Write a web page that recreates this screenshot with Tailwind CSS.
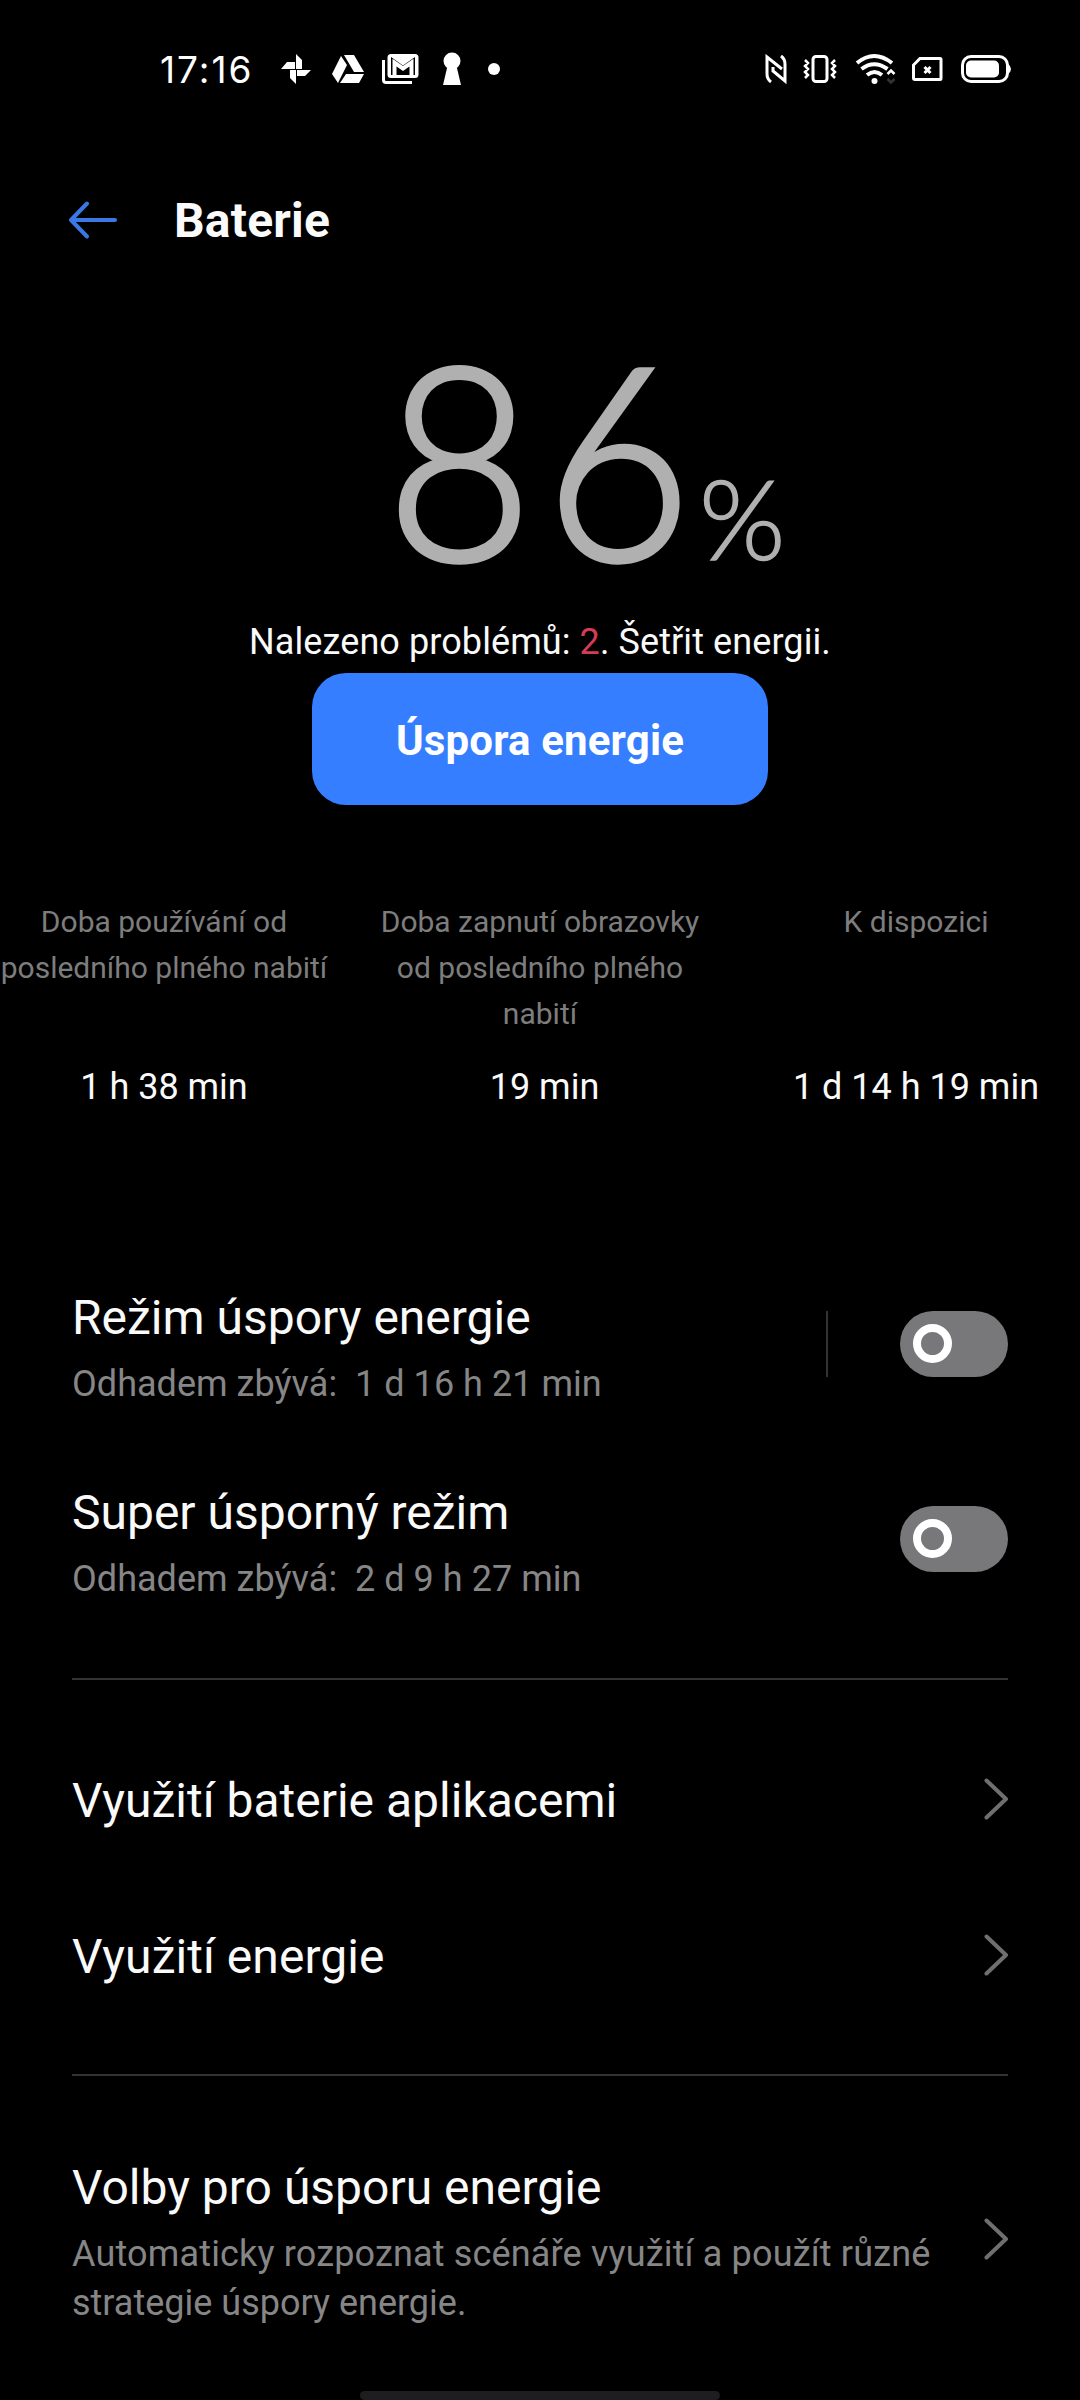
<!DOCTYPE html>
<html lang="cs">
<head>
  <meta charset="UTF-8" />
  <meta name="viewport" content="width=device-width, initial-scale=1.0" />
  <title>Baterie</title>
  <script src="https://cdn.jsdelivr.net/npm/@tailwindcss/browser@4"></script>
</head>
<body class="bg-black">
<div class="w-[1080px] h-[2400px] overflow-hidden bg-black text-[#fafafa] font-[Roboto,sans-serif] flex flex-col">

  <!-- Status bar -->
  <div class="h-[138px] shrink-0 flex items-center pl-[160px] pr-[68px] text-white">
    <span class="w-[93px] text-[37px] leading-none tracking-[2px] whitespace-nowrap font-[Inter,sans-serif]">17:16</span>
    <svg class="ml-[27px]" width="32" height="32" viewBox="0 0 32 32" fill="#fff">
      <path d="M16 1l6 6v9h-6zM31 17l-6 6H17v-6zM16 31l-6-6v-8h6zM1 16l6-7h8v7z"/>
    </svg>
    <svg class="ml-[19px]" width="34" height="30" viewBox="0 0 34 30" fill="#fff">
      <path d="M10 2l6 9L7 29l-6-9zM13 1h10l10 17H23zM15 20h18l-5 9H9z"/>
    </svg>
    <svg class="ml-[16px]" width="38" height="32" viewBox="0 0 38 32" fill="none" stroke="#fff">
      <path d="M2.500 7v20q0 2.500 2.500 2.500H31" stroke-width="3"/>
      <rect x="6.500" y="1" width="31" height="24" rx="3.500" fill="#fff" stroke="none"/>
      <path d="M10 4l12 8.500L34 4v18H10z" fill="#000" stroke="none"/>
      <path d="M13.500 23V9.500l8.500 6 8.500-6V23" stroke-width="4"/>
    </svg>
    <svg class="ml-[23px]" width="20" height="34" viewBox="0 0 20 34" fill="#fff">
      <circle cx="10" cy="9" r="8.500"/>
      <path d="M5.500 14h9L19 33H1z"/>
    </svg>
    <div class="ml-[26px] size-3 rounded-full bg-white"></div>

    <svg class="ml-auto" width="22" height="30" viewBox="0 0 22 30" fill="none" stroke="#fff" stroke-width="3">
      <path d="M6 28q-4-3-4-8V3l15 12"/>
      <path d="M16 2q4 3 4 8v17L8 17v-4"/>
    </svg>
    <svg class="ml-[16px]" width="34" height="30" viewBox="0 0 34 30" fill="none" stroke="#fff">
      <rect x="10" y="2.500" width="14" height="25" rx="3" stroke-width="3"/>
      <path d="M2 6l3 3-3 3 3 3-3 3 3 3-3 3M32 6l-3 3 3 3-3 3 3 3-3 3 3 3" stroke-width="2.500"/>
    </svg>
    <svg class="ml-[18px]" width="42" height="32" viewBox="0 0 42 32" fill="none" stroke="#fff" stroke-width="4">
      <path d="M2 10q17-14 35 0M6.500 16q12.500-9.500 26 0M12 22q7.500-6 15 0"/>
      <circle cx="19.500" cy="28" r="3" fill="#fff" stroke="none"/>
      <path d="M32.500 21l3.500-3.500 3.500 3.500" stroke-width="2.500"/>
      <path d="M32.500 26l3.500 3.500 3.500-3.500" stroke="#333" stroke-width="2.500"/>
    </svg>
    <svg class="ml-[14px]" width="32" height="26" viewBox="0 0 32 26" fill="none" stroke="#fff" stroke-width="3">
      <path d="M9 2.500h20q1 0 1 1v19q0 1-1 1H4q-1.500 0-1.500-1.500V9z"/>
      <path d="M13.500 11l6 6M19.500 11l-6 6"/>
    </svg>
    <svg class="ml-[18px]" width="51" height="30" viewBox="0 0 51 30" fill="none">
      <rect x="1.500" y="2.500" width="45" height="25" rx="8.500" stroke="#fff" stroke-width="3"/>
      <rect x="5" y="6.500" width="33" height="17" rx="5" fill="#fff"/>
      <path d="M47 10q3 2 3 5t-3 5z" fill="#fff"/>
    </svg>
  </div>

  <!-- Header -->
  <header class="h-[164px] shrink-0 flex items-center pl-[68px] gap-[56px]">
    <svg width="50" height="40" viewBox="0 0 50 40" fill="none" stroke="#3a78e6" stroke-width="4" stroke-linecap="round" stroke-linejoin="round">
      <path d="M19 3.500L3 20l16 16.500M3 20h44"/>
    </svg>
    <h1 class="pt-[2px] text-[48px] leading-[56px] tracking-[0.2px] font-bold">Baterie</h1>
  </header>

  <!-- Charge level -->
  <section class="shrink-0 flex flex-col items-center">
    <div class="h-[312px] w-full flex items-baseline pl-[386px] font-[Lato,sans-serif] font-light text-[#b0b0b1]">
      <span class="text-[269px] leading-[308px] tracking-[13px] origin-left scale-x-[0.94] [-webkit-text-stroke:5px_#b0b0b1]">86</span>
      <span class="-ml-[25px] text-[111px] leading-[120px] [-webkit-text-stroke:1.5px_#b0b0b1]">%</span>
    </div>
    <p class="h-[59px] pt-[7px] text-[36px] leading-[42px] tracking-[0.09px]">Nalezeno problémů: <span class="text-[#d53c54]">2</span>. Šetřit energii.</p>
    <button class="w-[456px] h-[132px] pt-[2px] rounded-[34px] bg-[#347eff] text-white text-[42px] tracking-[0.15px] font-bold">Úspora energie</button>
  </section>

  <!-- Usage stats -->
  <section class="shrink-0 mt-[94px] h-[348px] grid grid-cols-3 gap-x-12 text-center">
    <div class="flex flex-col items-center">
      <p class="h-[167px] text-[30px] leading-[46px] text-[#7d7d7d] whitespace-nowrap">Doba používání od<br>posledního plného nabití</p>
      <p class="text-[36px] leading-[42px]">1 h 38 min</p>
    </div>
    <div class="flex flex-col items-center">
      <p class="h-[167px] text-[30px] leading-[46px] text-[#7d7d7d] whitespace-nowrap">Doba zapnutí obrazovky<br>od posledního plného<br>nabití</p>
      <p class="pl-[9px] text-[36px] leading-[42px]">19 min</p>
    </div>
    <div class="flex flex-col items-center">
      <p class="h-[167px] text-[30px] leading-[46px] text-[#7d7d7d]">K dispozici</p>
      <p class="text-[36px] leading-[42px]">1 d 14 h 19 min</p>
    </div>
  </section>

  <!-- Power saving modes -->
  <section class="shrink-0 mx-[72px] pb-[41px] border-b-2 border-[#333335]">
    <div class="h-[195px] flex items-center">
      <div class="flex-1 pt-[9px]">
        <h2 class="text-[48px] leading-[56px]">Režim úspory energie</h2>
        <p class="mt-[14px] text-[36px] leading-[49px] tracking-[0.03px] text-[#868686] whitespace-pre">Odhadem zbývá:  1 d 16 h 21 min</p>
      </div>
      <div class="w-[2px] h-[66px] bg-[#333335] mr-[72px] mb-[2px]"></div>
      <div class="w-[108px] h-[66px] mb-[2px] rounded-full bg-[#78787a] flex items-center pl-[13px]">
        <div class="size-[39px] rounded-full border-8 border-white"></div>
      </div>
    </div>
    <div class="h-[195px] flex items-center">
      <div class="flex-1 pt-[9px]">
        <h2 class="text-[48px] leading-[56px]">Super úsporný režim</h2>
        <p class="mt-[14px] text-[36px] leading-[49px] tracking-[0.03px] text-[#868686] whitespace-pre">Odhadem zbývá:  2 d 9 h 27 min</p>
      </div>
      <div class="w-[108px] h-[66px] mb-[2px] rounded-full bg-[#78787a] flex items-center pl-[13px]">
        <div class="size-[39px] rounded-full border-8 border-white"></div>
      </div>
    </div>
  </section>

  <!-- Usage -->
  <section class="shrink-0 mx-[72px] pt-10 pb-[42px] border-b-2 border-[#333335]">
    <div class="h-[156px] flex items-center justify-between">
      <h2 class="pt-[5px] text-[48px] leading-[56px]">Využití baterie aplikacemi</h2>
      <svg class="mt-[2px]" width="25" height="42" viewBox="0 0 25 42" fill="none" stroke="#6f6f71" stroke-width="4" stroke-linecap="round" stroke-linejoin="round"><path d="M3.500 2.500L23 21 3.500 39.500"/></svg>
    </div>
    <div class="h-[156px] flex items-center justify-between">
      <h2 class="pt-[5px] text-[48px] leading-[56px] tracking-[0.05px]">Využití energie</h2>
      <svg class="mt-[2px]" width="25" height="42" viewBox="0 0 25 42" fill="none" stroke="#6f6f71" stroke-width="4" stroke-linecap="round" stroke-linejoin="round"><path d="M3.500 2.500L23 21 3.500 39.500"/></svg>
    </div>
  </section>

  <!-- Saving options -->
  <section class="shrink-0 mx-[72px] mt-[75px] flex items-center justify-between">
    <div class="pt-[9px]">
      <h2 class="text-[48px] leading-[56px]">Volby pro úsporu energie</h2>
      <p class="mt-[14px] text-[36px] leading-[49px] text-[#868686] whitespace-nowrap"><span class="tracking-[0.16px]">Automaticky rozpoznat scénáře využití a použít různé</span><br>strategie úspory energie.</p>
    </div>
    <svg class="mb-[2px]" width="25" height="42" viewBox="0 0 25 42" fill="none" stroke="#6f6f71" stroke-width="4" stroke-linecap="round" stroke-linejoin="round"><path d="M3.500 2.500L23 21 3.500 39.500"/></svg>
  </section>

  <!-- Gesture bar -->
  <div class="mt-auto mx-auto w-[360px] h-[9px] shrink-0 rounded-full bg-[#1e1e20]"></div>
</div>
</body>
</html>
